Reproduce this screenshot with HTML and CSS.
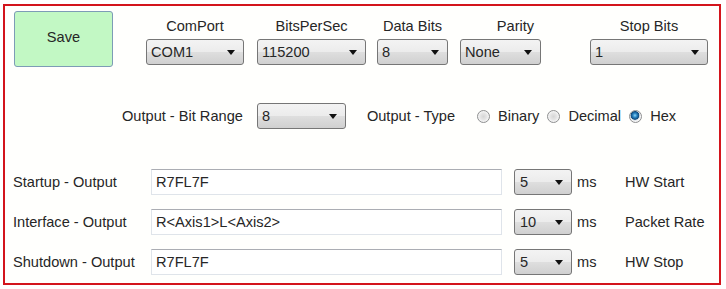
FILE: index.html
```html
<!DOCTYPE html>
<html lang="en">
<head>
  <meta charset="UTF-8">
  <title>Serial Output Settings</title>
  <link rel="stylesheet" href="styles.css">
</head>
<body>
  <div class="panel">
    <!-- PORT SETTINGS -->
    <div class="port-row">
      <button class="save">Save</button>
      <div class="field f-com">
        <div class="field-label">ComPort</div>
        <div class="combo"><span>COM1</span><i class="caret"></i></div>
      </div>
      <div class="field f-bps">
        <div class="field-label">BitsPerSec</div>
        <div class="combo"><span>115200</span><i class="caret"></i></div>
      </div>
      <div class="field f-data">
        <div class="field-label">Data Bits</div>
        <div class="combo"><span>8</span><i class="caret"></i></div>
      </div>
      <div class="field f-parity">
        <div class="field-label">Parity</div>
        <div class="combo"><span>None</span><i class="caret"></i></div>
      </div>
      <div class="field f-stop">
        <div class="field-label">Stop Bits</div>
        <div class="combo"><span>1</span><i class="caret"></i></div>
      </div>
    </div>

    <!-- OUTPUT FORMAT -->
    <div class="output-row">
      <span class="out-label">Output - Bit Range</span>
      <div class="combo combo-range"><span>8</span><i class="caret"></i></div>
      <span class="out-label type-label">Output - Type</span>
      <span class="radio"></span><span class="radio-text">Binary</span>
      <span class="radio"></span><span class="radio-text">Decimal</span>
      <span class="radio checked"></span><span class="radio-text">Hex</span>
    </div>

    <!-- OUTPUT STRINGS -->
    <div class="lines">
      <span class="line-label">Startup - Output</span>
      <div class="textbox">R7FL7F</div>
      <div class="combo combo-ms"><span>5</span><i class="caret"></i></div>
      <span class="unit">ms</span>
      <span class="note">HW Start</span>

      <span class="line-label">Interface - Output</span>
      <div class="textbox">R&lt;Axis1&gt;L&lt;Axis2&gt;</div>
      <div class="combo combo-ms"><span>10</span><i class="caret"></i></div>
      <span class="unit">ms</span>
      <span class="note">Packet Rate</span>

      <span class="line-label">Shutdown - Output</span>
      <div class="textbox">R7FL7F</div>
      <div class="combo combo-ms"><span>5</span><i class="caret"></i></div>
      <span class="unit">ms</span>
      <span class="note">HW Stop</span>
    </div>
  </div>
</body>
</html>
```

FILE: styles.css
```css
body {
  margin: 0;
  background: #ffffff;
  font-family: 'Liberation Sans', Arial, sans-serif;
  font-size: 14.6px;
  color: #262626;
}
.panel {
  box-sizing: border-box;
  width: 718px;
  height: 281px;
  margin: 4px 0 0 3px;
  border: 2px solid #d3141c;
  padding-top: 5px;
  background: #fffffd;
}

/* port row */
.port-row {
  display: flex;
  align-items: flex-end;
  padding-left: 9px;
}
.save {
  box-sizing: border-box;
  width: 99px;
  height: 56px;
  background: #c2f8c4;
  border: 1px solid #7d9cb6;
  border-radius: 3px;
  font-family: inherit;
  font-size: 14.6px;
  color: #262626;
  padding: 0 0 4px 0;
}
.field {
  display: flex;
  flex-direction: column;
  margin-bottom: 2px;
}
.field-label {
  text-align: center;
  line-height: 17px;
  margin-bottom: 4px;
}
.f-com { margin-left: 33px; width: 98px; }
.f-bps { margin-left: 13px; width: 109px; }
.f-data { margin-left: 11px; width: 71px; }
.f-parity { margin-left: 12px; width: 81px; }
.f-parity .field-label { padding-left: 30px; }
.f-stop { margin-left: 49px; width: 118px; }

/* combo boxes */
.combo {
  box-sizing: border-box;
  height: 26px;
  display: flex;
  align-items: center;
  justify-content: space-between;
  padding: 0 8px 0 4px;
  border: 1px solid #767676;
  border-radius: 3px;
  background: linear-gradient(#f3f3f3, #ececec 48%, #dedede 52%, #d0d0d0);
}
.caret {
  width: 0;
  height: 0;
  border-top: 5px solid #111111;
  border-left: 4px solid transparent;
  border-right: 4px solid transparent;
}

/* output row */
.output-row {
  display: flex;
  align-items: center;
  height: 26px;
  margin-top: 36px;
  padding-left: 117px;
}
.combo-range {
  width: 89px;
  margin-left: 14px;
  margin-right: 21px;
}
.type-label {
  margin-right: 22px;
}
.radio {
  box-sizing: border-box;
  width: 13px;
  height: 13px;
  border-radius: 50%;
  border: 1px solid #8e8f90;
  background: radial-gradient(circle at 50% 50%, #d6d6d6 0, #e4e4e4 3px, #f6f6f6 5.5px);
  margin-right: 8px;
}
.radio.checked {
  background: radial-gradient(circle at 45% 40%, #8fd6f6 0, #2b86c4 2px, #0f4a7c 4px, #c9d3dc 4.6px, #f6f6f6 5.5px);
}
.radio-text {
  margin-right: 8px;
}

/* output strings */
.lines {
  display: grid;
  grid-template-columns: 138px 363px 63px 48px 1fr;
  grid-auto-rows: 26px;
  row-gap: 14px;
  align-items: center;
  margin-top: 40px;
  padding-left: 8px;
}
.textbox {
  box-sizing: border-box;
  width: 351px;
  height: 26px;
  line-height: 24px;
  padding-left: 4px;
  border: 1px solid #dfe4ea;
  border-top-color: #abadb3;
  background: #ffffff;
}
.combo-ms {
  width: 58px;
  padding-left: 5px;
}
```
